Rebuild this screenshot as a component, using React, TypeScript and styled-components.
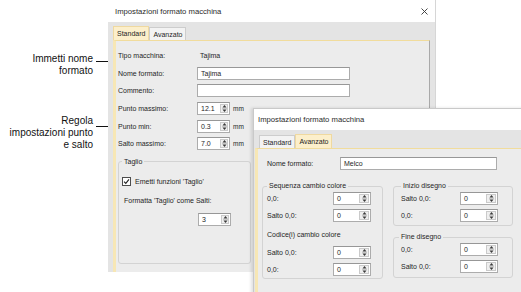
import React from "react";
import styled, { createGlobalStyle } from "styled-components";

const GlobalStyle = createGlobalStyle`
  html, body {
    margin: 0;
    padding: 0;
    background: #ffffff;
  }
  body {
    font-family: "Liberation Sans", Arial, sans-serif;
  }
  * {
    box-sizing: border-box;
  }
`;

const Canvas = styled.div`
  position: relative;
  width: 521px;
  height: 292px;
  overflow: hidden;
  background: #ffffff;
`;

/* callouts on the left */
const Callout = styled.div<{ $top: number }>`
  position: absolute;
  left: 0;
  top: ${(p) => p.$top}px;
  display: flex;
  align-items: flex-start;
`;

const CalloutText = styled.div`
  width: 93px;
  text-align: right;
  font-size: 10px;
  line-height: 12px;
  color: #111;
`;

const Leader = styled.svg<{ $offset: number }>`
  margin-top: ${(p) => p.$offset}px;
  margin-left: 3px;
  flex: none;
`;

/* windows */
const Window = styled.div<{ $left: number; $top: number; $width: number; $height: number }>`
  position: absolute;
  left: ${(p) => p.$left}px;
  top: ${(p) => p.$top}px;
  width: ${(p) => p.$width}px;
  height: ${(p) => p.$height}px;
  display: flex;
  flex-direction: column;
  background: #ffffff;
  color: #1e1e1e;
  font-size: 7px;
`;

const MainWindow = styled(Window)`
  border-right: 1px solid #d6d6d6;
`;

const FloatingWindow = styled(Window)`
  border-top: 1px solid #c9c9c9;
  border-left: 1px solid #c9c9c9;
  box-shadow: -2px 0 3px rgba(0, 0, 0, 0.12);
`;

const TitleBar = styled.div<{ $pad: number; $height: number }>`
  height: ${(p) => p.$height}px;
  flex: none;
  display: flex;
  align-items: center;
  padding: 0 7px 0 ${(p) => p.$pad}px;
  font-size: 7.7px;
  color: #2a2a2a;
`;

const TitleText = styled.span`
  flex: 1;
`;

const TabArea = styled.div<{ $side: number }>`
  flex: none;
  display: flex;
  flex-direction: column;
  background: #e4e4e4;
  padding: 0 ${(p) => p.$side}px 0 ${(p) => p.$side}px;
`;

const TabStrip = styled.div<{ $pad: number }>`
  height: 18px;
  display: flex;
  align-items: flex-end;
  padding-left: ${(p) => p.$pad}px;
`;

const Tab = styled.div<{ $active?: boolean }>`
  height: ${(p) => (p.$active ? 14 : 13)}px;
  padding: 0 3px;
  display: flex;
  align-items: center;
  font-size: 7px;
  background: ${(p) => (p.$active ? "#fcefcb" : "#f3f3f3")};
  border: 1px solid ${(p) => (p.$active ? "#efd9a0" : "#cdcdcd")};
  border-bottom: none;
  color: #1e1e1e;
`;

const Panel = styled.div<{ $height: number }>`
  height: ${(p) => p.$height}px;
  background: #ececec;
  border-top: 1px solid #f1dc9c;
  border-left: 3px solid #f7e7b5;
  border-right: 1px solid #a9a9a9;
`;

/* dialog 1 */
const MainContent = styled.div`
  padding: 6px 0 0 2px;
`;

const FieldGrid = styled.div`
  display: grid;
  grid-template-columns: 79px 1fr;
  grid-auto-rows: 17.6px;
  align-items: center;
`;

const Label = styled.span`
  white-space: nowrap;
`;

const StaticValue = styled.span`
  padding-left: 3px;
`;

const TextBox = styled.div<{ $width: number }>`
  width: ${(p) => p.$width}px;
  height: 13px;
  background: #ffffff;
  border: 1px solid #acacac;
  border-top-color: #979797;
  display: flex;
  align-items: center;
  padding-left: 3px;
`;

const SpinWrap = styled.div`
  display: flex;
  align-items: center;
  gap: 3px;
`;

const SpinBox = styled.div<{ $width: number }>`
  width: ${(p) => p.$width}px;
  height: 13px;
  background: #ffffff;
  border: 1px solid #acacac;
  border-top-color: #979797;
  display: flex;
  align-items: stretch;
`;

const SpinValue = styled.span`
  flex: 1;
  display: flex;
  align-items: center;
  padding-left: 3px;
`;

const SpinArrows = styled.div<{ $width: number }>`
  width: ${(p) => p.$width}px;
  margin: 1px;
  background: #efefef;
  border: 1px solid #cacaca;
  display: flex;
  align-items: center;
  justify-content: center;
`;

const Unit = styled.span`
  font-size: 6.5px;
`;

const Group = styled.fieldset<{ $width: number; $padLeft: number; $padBottom: number; $marginTop: number }>`
  margin: ${(p) => p.$marginTop}px 0 0 0;
  width: ${(p) => p.$width}px;
  border: 1px solid #d3d3d3;
  border-radius: 3px;
  padding: 0 0 ${(p) => p.$padBottom}px ${(p) => p.$padLeft}px;
  min-width: 0;
`;

const Legend = styled.legend<{ $shift?: number }>`
  padding: 0 2px;
  margin-left: ${(p) => p.$shift ?? 0}px;
  font-size: 7px;
  line-height: 8px;
`;

const CheckRow = styled.div`
  height: 19px;
  margin-top: 6px;
  display: flex;
  align-items: center;
  gap: 4px;
`;

const CheckBox = styled.div`
  width: 9px;
  height: 9px;
  background: #ffffff;
  border: 1px solid #4d4d4d;
  display: flex;
  align-items: center;
  justify-content: center;
`;

const PlainRow = styled.div<{ $indent: number }>`
  height: 19px;
  display: flex;
  align-items: center;
  padding-left: ${(p) => p.$indent}px;
`;

/* dialog 2 */
const AdvContent = styled.div`
  padding: 8px 0 0 4px;
`;

const NameRow = styled.div`
  height: 13px;
  display: grid;
  grid-template-columns: 73px 1fr;
  align-items: center;
  padding-left: 5px;
`;

const GroupsRow = styled.div`
  display: flex;
  gap: 10px;
  margin-top: 12px;
  align-items: flex-start;
`;

const GroupColumn = styled.div`
  display: flex;
  flex-direction: column;
`;

const SpinRow = styled.div<{ $label: number }>`
  height: 17px;
  display: grid;
  grid-template-columns: ${(p) => p.$label}px auto;
  align-items: center;
`;

const SubHead = styled.div`
  height: 20px;
  display: flex;
  align-items: center;
  padding-top: 1px;
`;

function ArrowGlyph() {
  return (
    <svg width="5" height="9" viewBox="0 0 5 9">
      <path d="M2.5 1 L4.5 3.5 L0.5 3.5 Z" fill="#3a3a3a" />
      <line x1="0" y1="4.5" x2="5" y2="4.5" stroke="#bdbdbd" strokeWidth="0.8" />
      <path d="M0.5 5.5 L4.5 5.5 L2.5 8 Z" fill="#3a3a3a" />
    </svg>
  );
}

function Spinner({ value, width, arrows }: { value: string; width: number; arrows: number }) {
  return (
    <SpinBox $width={width}>
      <SpinValue>{value}</SpinValue>
      <SpinArrows $width={arrows}>
        <ArrowGlyph />
      </SpinArrows>
    </SpinBox>
  );
}

function LeaderLine({ offset }: { offset: number }) {
  return (
    <Leader $offset={offset} width="20" height="5" viewBox="0 0 20 5">
      <line x1="0" y1="2.5" x2="17" y2="2.5" stroke="#111" strokeWidth="1" />
      <path d="M16 0.5 L20 2.5 L16 4.5 Z" fill="#111" />
    </Leader>
  );
}

const App: React.FC = () => {
  return (
    <Canvas>
      <GlobalStyle />

      <Callout $top={53}>
        <CalloutText>
          Immetti nome
          <br />
          formato
        </CalloutText>
        <LeaderLine offset={6} />
      </Callout>

      <Callout $top={115}>
        <CalloutText>
          Regola
          <br />
          impostazioni punto
          <br />e salto
        </CalloutText>
        <LeaderLine offset={9} />
      </Callout>

      <MainWindow $left={108} $top={0} $width={328} $height={292}>
        <TitleBar $pad={7} $height={22}>
          <TitleText>Impostazioni formato macchina</TitleText>
          <svg width="7" height="7" viewBox="0 0 7 7">
            <path d="M0.5 0.5 L6.5 6.5 M6.5 0.5 L0.5 6.5" stroke="#333" strokeWidth="0.9" />
          </svg>
        </TitleBar>
        <TabArea $side={5}>
          <TabStrip $pad={0}>
            <Tab $active>Standard</Tab>
            <Tab>Avanzato</Tab>
          </TabStrip>
          <Panel $height={232}>
            <MainContent>
              <FieldGrid>
                <Label>Tipo macchina:</Label>
                <StaticValue>Tajima</StaticValue>
                <Label>Nome formato:</Label>
                <TextBox $width={153}>Tajima</TextBox>
                <Label>Commento:</Label>
                <TextBox $width={153} />
                <Label>Punto massimo:</Label>
                <SpinWrap>
                  <Spinner value="12.1" width={33} arrows={8} />
                  <Unit>mm</Unit>
                </SpinWrap>
                <Label>Punto min:</Label>
                <SpinWrap>
                  <Spinner value="0.3" width={33} arrows={8} />
                  <Unit>mm</Unit>
                </SpinWrap>
                <Label>Salto massimo:</Label>
                <SpinWrap>
                  <Spinner value="7.0" width={33} arrows={8} />
                  <Unit>mm</Unit>
                </SpinWrap>
              </FieldGrid>

              <Group $width={133} $padLeft={3} $padBottom={34} $marginTop={5}>
                <Legend>Taglio</Legend>
                <CheckRow>
                  <CheckBox>
                    <svg width="7" height="7" viewBox="0 0 7 7">
                      <path d="M1 3.6 L2.8 5.4 L6 1.4" fill="none" stroke="#222" strokeWidth="1.1" />
                    </svg>
                  </CheckBox>
                  <span>Emetti funzioni 'Taglio'</span>
                </CheckRow>
                <PlainRow $indent={2}>Formatta 'Taglio' come Salti:</PlainRow>
                <PlainRow $indent={76}>
                  <Spinner value="3" width={33} arrows={8} />
                </PlainRow>
              </Group>
            </MainContent>
          </Panel>
        </TabArea>
      </MainWindow>

      <FloatingWindow $left={253} $top={108} $width={272} $height={190}>
        <TitleBar $pad={4} $height={21}>
          <TitleText>Impostazioni formato macchina</TitleText>
        </TitleBar>
        <TabArea $side={1}>
          <TabStrip $pad={4}>
            <Tab>Standard</Tab>
            <Tab $active>Avanzato</Tab>
          </TabStrip>
          <Panel $height={150}>
            <AdvContent>
              <NameRow>
                <Label>Nome formato:</Label>
                <TextBox $width={157}>Melco</TextBox>
              </NameRow>

              <GroupsRow>
                <Group $width={121} $padLeft={4} $padBottom={0} $marginTop={0}>
                  <Legend>Sequenza cambio colore</Legend>
                  <SpinRow $label={66}>
                    <Label>0,0:</Label>
                    <Spinner value="0" width={38} arrows={10} />
                  </SpinRow>
                  <SpinRow $label={66}>
                    <Label>Salto 0,0:</Label>
                    <Spinner value="0" width={38} arrows={10} />
                  </SpinRow>
                  <SubHead>Codice(i) cambio colore</SubHead>
                  <SpinRow $label={66}>
                    <Label>Salto 0,0:</Label>
                    <Spinner value="0" width={38} arrows={10} />
                  </SpinRow>
                  <SpinRow $label={66}>
                    <Label>0,0:</Label>
                    <Spinner value="0" width={38} arrows={10} />
                  </SpinRow>
                </Group>

                <GroupColumn>
                  <Group $width={120} $padLeft={7} $padBottom={1} $marginTop={0}>
                    <Legend>Inizio disegno</Legend>
                    <SpinRow $label={59}>
                      <Label>Salto 0,0:</Label>
                      <Spinner value="0" width={38} arrows={10} />
                    </SpinRow>
                    <SpinRow $label={59}>
                      <Label>0,0:</Label>
                      <Spinner value="0" width={38} arrows={10} />
                    </SpinRow>
                  </Group>
                  <Group $width={120} $padLeft={7} $padBottom={2} $marginTop={7}>
                    <Legend $shift={-2}>Fine disegno</Legend>
                    <SpinRow $label={59}>
                      <Label>0,0:</Label>
                      <Spinner value="0" width={38} arrows={10} />
                    </SpinRow>
                    <SpinRow $label={59}>
                      <Label>Salto 0,0:</Label>
                      <Spinner value="0" width={38} arrows={10} />
                    </SpinRow>
                  </Group>
                </GroupColumn>
              </GroupsRow>
            </AdvContent>
          </Panel>
        </TabArea>
      </FloatingWindow>
    </Canvas>
  );
};

export default App;
